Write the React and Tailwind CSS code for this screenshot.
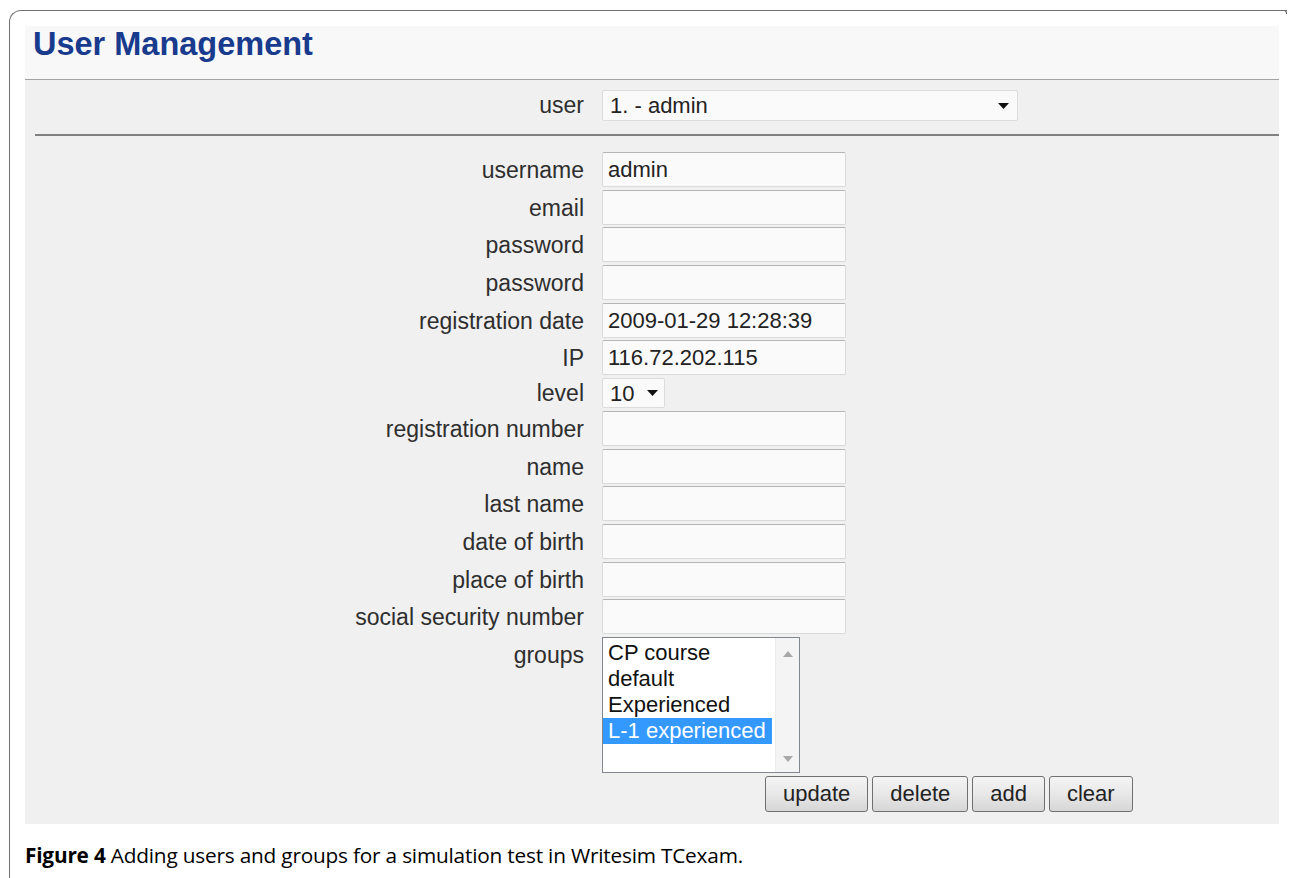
const fields = [
  { label: "username", value: "admin" },
  { label: "email", value: "" },
  { label: "password", value: "" },
  { label: "password", value: "" },
  { label: "registration date", value: "2009-01-29 12:28:39" },
  { label: "IP", value: "116.72.202.115" },
];

const moreFields = [
  "registration number",
  "name",
  "last name",
  "date of birth",
  "place of birth",
  "social security number",
];

const groups = ["CP course", "default", "Experienced", "L-1 experienced"];

function Caret({ className = "" }) {
  return (
    <svg width="11" height="6" viewBox="0 0 11 6" className={className}>
      <path d="M0 0 H11 L5.5 6 Z" fill="#111" />
    </svg>
  );
}

function Label({ children }) {
  return (
    <div className="w-[559px] h-[35px] shrink-0 text-right text-[23px] leading-[37px] text-[#2e2e2e]">
      {children}
    </div>
  );
}

function TextBox({ value }) {
  return (
    <div className="w-[244px] h-[35px] bg-[#fafafa] border border-[#d9d9d9] border-t-[#b5b5b5] rounded-[2px] pl-[5px] text-[22px] leading-[34px] text-[#222]">
      {value}
    </div>
  );
}

function Button({ children }) {
  return (
    <div className="h-[36px] px-[17px] border border-[#707070] rounded-[3px] bg-gradient-to-b from-[#f4f4f4] via-[#e8e8e8] to-[#d6d6d6] text-[22px] leading-[34px] text-[#222]">
      {children}
    </div>
  );
}

export default function App() {
  return (
    <div
      className="w-[1289px] h-[878px] bg-white overflow-hidden"
      style={{ fontFamily: '"Liberation Sans", Arial, sans-serif' }}
    >
      <div className="ml-[9px] mt-[10px] w-[1278px] h-[868px] border-l-[1.5px] border-t border-[#6f6f6f] rounded-tl-[12px] pl-[15px] pt-[15px] relative">
        <div className="absolute right-0 top-[-1px] w-[3px] h-[4px] border-t border-r border-[#6f6f6f] rounded-tr-[3px]" />

        <div className="w-[1254px] bg-[#f0f0f0]">
          {/* page heading */}
          <div className="h-[54px] bg-[#f8f8f8] border-b border-[#a2a2a2] pl-[8px] text-[32.5px] leading-[37px] font-bold text-[#183b8e]">
            User Management
          </div>

          {/* user picker */}
          <div className="h-[54px] pt-[10px] flex gap-[18px]">
            <div className="w-[559px] shrink-0 text-right text-[23px] leading-[31px] text-[#2e2e2e]">
              user
            </div>
            <div className="w-[416px] h-[31px] bg-[#fafafa] border border-[#dcdcdc] rounded-[2px] pl-[7px] pr-[8px] flex items-center justify-between text-[22px] text-[#222]">
              <span>1. - admin</span>
              <Caret />
            </div>
          </div>
          <div className="ml-[10px] border-t-2 border-[#808080]" />

          {/* user form */}
          <div className="pt-[16px] pb-[12px] flex flex-col gap-[2.7px]">
            {fields.map((f, i) => (
              <div key={i} className="flex gap-[18px] h-[35px]">
                <Label>{f.label}</Label>
                <TextBox value={f.value} />
              </div>
            ))}

            <div className="flex gap-[18px] h-[30px]">
              <div className="w-[559px] h-[30px] shrink-0 text-right text-[23px] leading-[31px] text-[#2e2e2e]">
                level
              </div>
              <div className="w-[63px] h-[30px] bg-[#fafafa] border border-[#dcdcdc] rounded-[2px] pl-[7px] pr-[6px] flex items-center justify-between text-[22px] text-[#222]">
                <span>10</span>
                <Caret />
              </div>
            </div>

            {moreFields.map((l, i) => (
              <div key={i} className="flex gap-[18px] h-[35px]">
                <Label>{l}</Label>
                <TextBox value="" />
              </div>
            ))}

            <div className="flex gap-[18px]">
              <Label>groups</Label>
              <div className="w-[198px] h-[136px] bg-white border border-[#828790] flex">
                <div className="flex-1 pt-[2px] text-[22px] leading-[26px] text-[#111]">
                  {groups.map((g, i) => (
                    <div
                      key={g}
                      className={
                        i === 3
                          ? "w-[169px] pl-[5px] bg-[#3399ff] text-white"
                          : "pl-[5px]"
                      }
                    >
                      {g}
                    </div>
                  ))}
                </div>
                <div className="w-[24px] bg-[#f4f4f4] border-l border-[#ededed] flex flex-col items-center justify-between pt-[13px] pb-[10px]">
                  <svg width="10" height="6" viewBox="0 0 10 6">
                    <path d="M0 6 L5 0 L10 6 Z" fill="#a8a8a8" />
                  </svg>
                  <svg width="10" height="6" viewBox="0 0 10 6">
                    <path d="M0 0 H10 L5 6 Z" fill="#a8a8a8" />
                  </svg>
                </div>
              </div>
            </div>

            <div className="flex gap-[4px] pl-[740px]">
              <Button>update</Button>
              <Button>delete</Button>
              <Button>add</Button>
              <Button>clear</Button>
            </div>
          </div>
        </div>

        {/* figure caption */}
        <div
          className="mt-[19px] text-[20.8px] leading-[24px] tracking-[-0.2px] text-black"
          style={{ fontFamily: '"Open Sans", "Noto Sans", sans-serif' }}
        >
          <span className="font-bold">Figure 4</span> Adding users and groups for a simulation test in Writesim TCexam.
        </div>
      </div>
    </div>
  );
}
